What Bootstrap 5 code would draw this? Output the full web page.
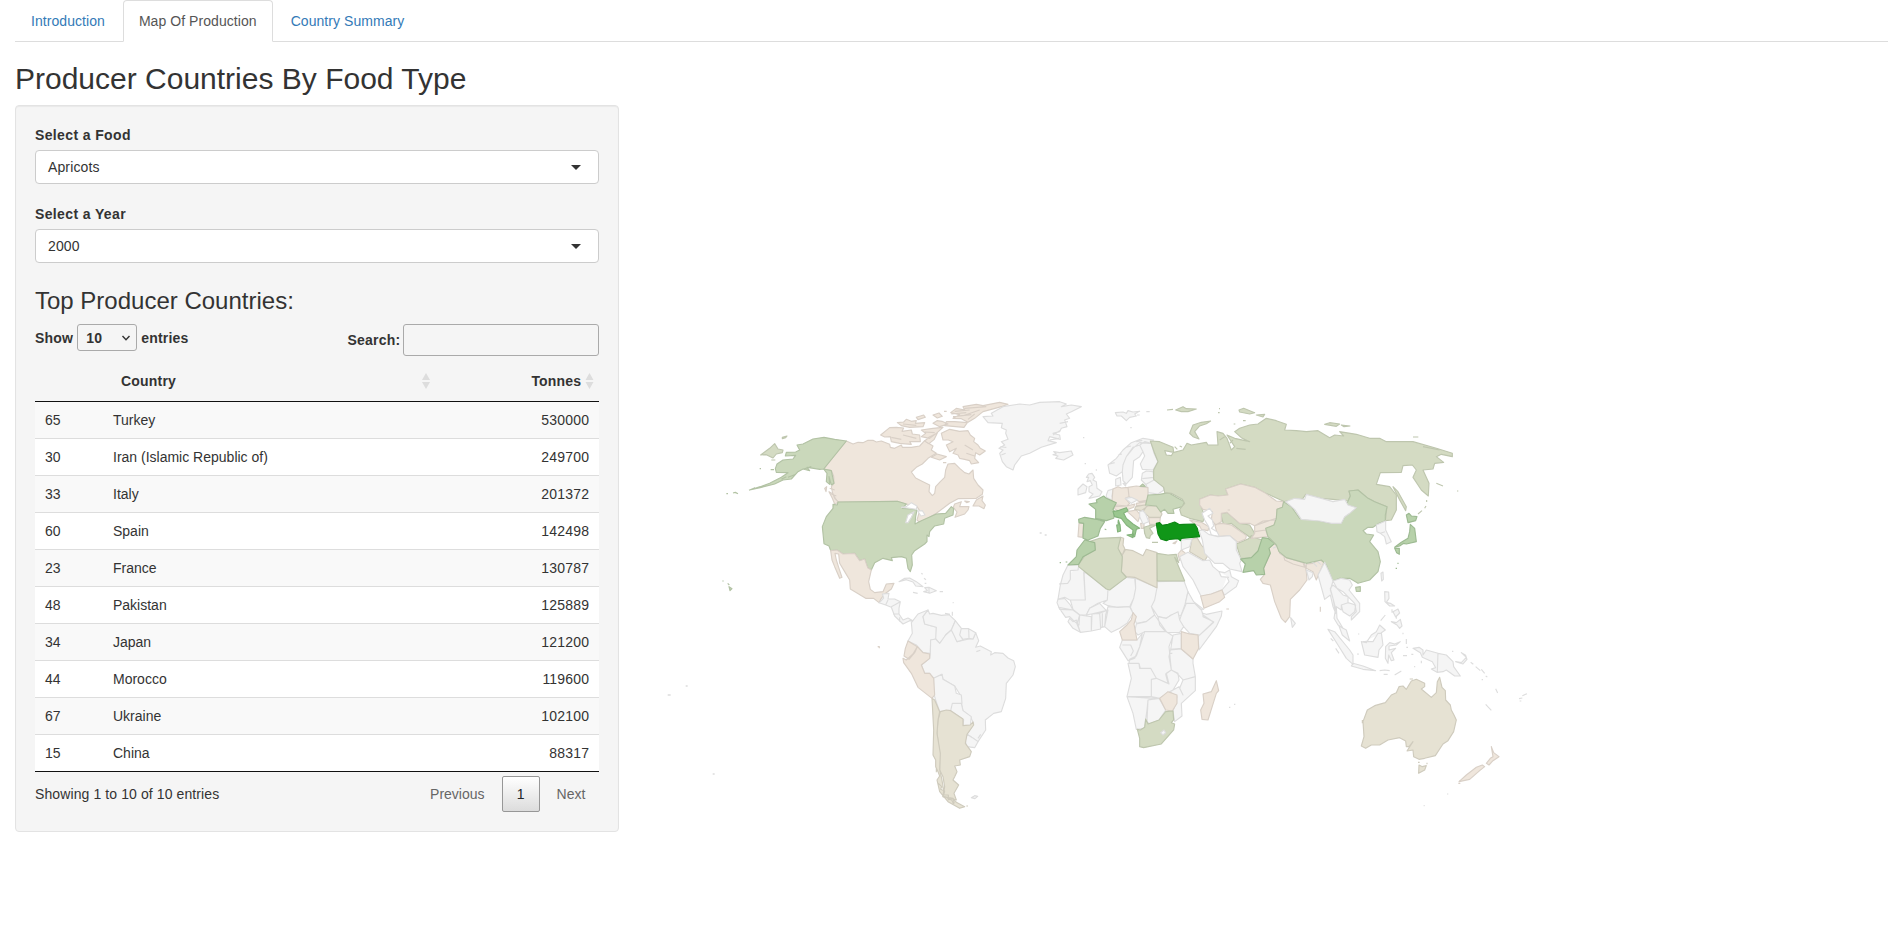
<!DOCTYPE html>
<html lang="en">
<head>
<meta charset="utf-8">
<meta name="viewport" content="width=device-width, initial-scale=1">
<title>Food Production</title>
<link rel="stylesheet" href="https://cdn.jsdelivr.net/npm/bootstrap@5.3.0/dist/css/bootstrap.min.css">
<style>
body{font-family:"Liberation Sans",Arial,sans-serif;font-size:14px;line-height:20px;color:#333;overflow:hidden}
.page{padding:0 15px}
.page .nav-tabs{border-bottom:1px solid #ddd}
.page .nav-tabs .nav-link{padding:10px 15px;margin-right:2px;line-height:20px;color:#337ab7;border-radius:4px 4px 0 0;letter-spacing:.06px}
.page .nav-tabs .nav-link.active{color:#555;border-color:#ddd #ddd #fff}
h2{font-size:30px;line-height:33px;margin:20px 0 10px;font-weight:400}
h3{font-size:24px;line-height:26.4px;margin:25px 0 9.6px;font-weight:400}
.page>.row{--bs-gutter-x:30px}
.well{background:#f5f5f5;border:1px solid #e3e3e3;border-radius:4px;padding:19px;height:727px;box-shadow:inset 0 1px 1px rgba(0,0,0,.05)}
label,.strong-text{font-weight:700;letter-spacing:.2px}
.well>label{display:block;margin-bottom:5px;letter-spacing:.37px}
.picker{height:34px;border:1px solid #ccc;border-radius:4px;background:#fff;padding:0 17px 0 12px;margin-bottom:20px}
.picker span{letter-spacing:.12px}
.picker i{border:5px solid transparent;border-top-color:#333;border-bottom:0}
.len-box{width:60px;height:27px;border:1px solid #aaa;border-radius:3px;padding:0 5px 0 8px}
.search-box{width:196px;height:32px;border:1px solid #aaa;border-radius:3px;background:transparent;margin-left:3px}
.data-grid{width:100%;margin-top:6px;border-collapse:separate;border-spacing:0;table-layout:fixed;border-bottom:1px solid #111}
.data-grid th{height:40px;padding:0 10px 2px 18px;border-bottom:1px solid #111;letter-spacing:.2px}
.data-grid td{height:37px;padding:0 10px;border-top:1px solid #ddd}
.data-grid td.text-end{letter-spacing:.21px}
.data-grid tbody tr:first-child td{height:36px;border-top:0}
.data-grid tbody tr{background:#fff}
.data-grid tbody tr:nth-child(odd){background:#f9f9f9}
.pager-btn{height:36px;width:38px;border:1px solid #979797;border-radius:2px;background:linear-gradient(#fff,#dcdcdc);margin:0 17px}
.info-text{letter-spacing:.1px}
.muted{color:#666}
.world{display:block;width:100%;height:780px}
.world path{stroke:#ddd;stroke-width:3.4;stroke-linejoin:round;fill:#f5f5f5}
.world .c1 path,.world path.c1{fill:#efe6dc;stroke:#d9d0c7}
.world .c2 path,.world path.c2{fill:#e6e2d3;stroke:#cfcbbd}
.world .c3 path,.world path.c3{fill:#d4dbc3;stroke:#bec6ae}
.world .c4 path,.world path.c4{fill:#cad8bb;stroke:#b2c2a4}
.world .c5 path,.world path.c5{fill:#b7d1aa;stroke:#9dba92}
.world .c6 path,.world path.c6{fill:#99c78f;stroke:#84b37c}
.world .c7 path,.world path.c7{fill:#109618;stroke:#0e8715}
.world .sea path{fill:#fff}
.world .isles{stroke-width:1.3}
.world .india{fill:#ebe4d8}
</style>
</head>
<body>
<div class="page">
<ul class="nav nav-tabs">
<li class="nav-item"><a class="nav-link" href="#">Introduction</a></li>
<li class="nav-item"><a class="nav-link active" href="#">Map Of Production</a></li>
<li class="nav-item"><a class="nav-link" href="#">Country Summary</a></li>
</ul>
<h2>Producer Countries By Food Type</h2>
<div class="row">
<div class="col-4">
<div class="well">
<label>Select a Food</label>
<div class="picker d-flex align-items-center justify-content-between"><span>Apricots</span><i></i></div>
<label>Select a Year</label>
<div class="picker d-flex align-items-center justify-content-between"><span>2000</span><i></i></div>
<h3>Top Producer Countries:</h3>
<div class="d-flex justify-content-between align-items-start strong-text">
<div class="d-flex align-items-center gap-1"><span>Show</span><span class="len-box d-flex align-items-center justify-content-between">10<svg width="10" height="8" viewBox="0 0 10 8"><path d="M1.5 2 5 5.800 8.500 2" fill="none" stroke="#333" stroke-width="1.4"/></svg></span><span>entries</span></div>
<div class="d-flex align-items-center"><span>Search:</span><input class="search-box" type="text" aria-label="Search"></div>
</div>
<table class="data-grid">
<colgroup><col style="width:68px"><col style="width:337px"><col></colgroup>
<thead><tr><th></th><th><span class="d-flex align-items-center justify-content-between">Country<svg width="8" height="16" viewBox="0 0 8 16"><path d="M0 7 4 0l4 7zM0 9h8l-4 7z" fill="#ddd"/></svg></span></th><th style="padding-right:5px"><span class="d-flex align-items-center justify-content-end gap-1">Tonnes<svg width="9" height="16" viewBox="0 0 8 16"><path d="M0 7 4 0l4 7zM0 9h8l-4 7z" fill="#ddd"/></svg></span></th></tr></thead>
<tbody>
<tr><td>65</td><td>Turkey</td><td class="text-end">530000</td></tr>
<tr><td>30</td><td>Iran (Islamic Republic of)</td><td class="text-end">249700</td></tr>
<tr><td>33</td><td>Italy</td><td class="text-end">201372</td></tr>
<tr><td>60</td><td>Spain</td><td class="text-end">142498</td></tr>
<tr><td>23</td><td>France</td><td class="text-end">130787</td></tr>
<tr><td>48</td><td>Pakistan</td><td class="text-end">125889</td></tr>
<tr><td>34</td><td>Japan</td><td class="text-end">121200</td></tr>
<tr><td>44</td><td>Morocco</td><td class="text-end">119600</td></tr>
<tr><td>67</td><td>Ukraine</td><td class="text-end">102100</td></tr>
<tr><td>15</td><td>China</td><td class="text-end">88317</td></tr>
</tbody>
</table>
<div class="d-flex justify-content-between align-items-start pt-1">
<span class="pt-2 info-text">Showing 1 to 10 of 10 entries</span>
<div class="d-flex align-items-center muted"><span>Previous</span><span class="pager-btn d-flex align-items-center justify-content-center text-dark">1</span><span style="margin-right:14px">Next</span></div>
</div>
</div>
</div>
<div class="col-8">
<svg class="world" viewBox="649.33 105 1238.67 780" preserveAspectRatio="xMinYMin meet">
<!-- North America -->
<g transform="translate(720 390) scale(.33333)">
<g class="c1">
<path d="M380 153 400 162 415 157 430 158 445 151 460 151 470 156 485 153 510 163 512 172 525 175 545 165 548 172 575 172 600 168 615 152 640 168 635 180 650 190 625 205 608 222 590 232 575 246 588 264 610 275 630 285 628 305 638 317 645 310 648 290 662 275 675 262 678 240 685 222 705 220 720 235 735 248 748 252 760 240 762 265 775 285 790 300 788 313 770 325 715 326 690 340 650 370 625 385 600 398 592 390 600 362 592 350 560 342 533 334 355 336 340 315 335 290 343 280 342 258 335 242 312 237Z"/>
<path d="M705 342 725 335 720 350 748 350 745 360 735 372 706 382 712 366 701 352ZM760 348 770 330 790 318 787 332 797 345 793 356 778 348ZM328 305 340 312 345 325 357 337 345 342 338 325ZM330 295 345 300M335 312 350 318M315 295l6-5-2 15zM735 333l14 2-8 3z"/>
<path d="M665 130 690 118 720 124 745 122 752 135 765 145 762 155 775 165 782 175 797 183 780 195 768 188 765 205 777 218 755 222 750 212 735 208 720 205 715 195 700 190 710 175 690 185 680 165 700 155 686 150 670 150ZM735 165 760 180M740 190 765 198"/>
<path d="M483 135 510 113 530 112 552 114 547 124 575 120 578 132 600 135 602 155 570 155 575 163 540 160 515 155 512 140 495 141ZM515 142 545 148M550 135 590 145M533 98 552 96 560 88 575 94 590 92 587 100 615 98 610 110 570 112 545 107ZM550 102 590 106M605 120 640 115 670 112 650 130 630 145 605 140 618 130ZM615 126 645 128M640 100l12-8 15 2 18 8-25 8zM680 95l25 0 38 3-10 14-58-5zM640 75l18-6 10 10-15 5zM590 82l22-7 5 7-22 7zM673 64h8M635 202 652 192 680 200 660 210ZM615 153l14-12 24-12-10 20-15 12zM670 218h10"/>
<path d="M693 68 710 55 735 60 730 50 770 43 790 47 840 37 865 43 845 50 815 58 790 65 765 85 745 97 725 86 700 85 720 74ZM695 72 740 68M705 64 750 60M700 80 755 74M730 77 780 60M735 55 800 50M745 88 765 72"/>
</g>
<g class="c4">
<path d="M380 153 345 148 313 142 280 147 250 162 232 165 240 180 228 186 200 187 197 198 228 196 220 207 190 210 172 222 167 236 170 247 205 248 185 262 150 280 122 290 90 300 125 292 165 282 190 270 215 267 235 245 250 237 270 242 262 232 282 235 300 238 312 237ZM312 237 322 250 320 275 330 283 328 260 335 285 343 280 335 242ZM185 268l15-8M205 262l20-8M250 238l25-8M20 311h5M40 309l7-2 8 4M88 301l18-8M24 580l5 5M28 590l9 6-6 6zM8 573h4M153 239h10M120 236h4"/>
<path d="M355 336 533 334 560 342 548 355 575 357 592 360 588 380 586 402 605 392 650 372 678 370 695 350 702 356 700 375 675 385 672 402 645 408 630 425 628 440 622 435 622 455 615 462 585 482 576 495 578 525 572 545 565 535 560 505 545 500 515 503 518 512 490 505 465 518 455 540 444 533 435 507 420 512 405 490 370 492 352 480 333 482 328 468 313 461 308 410 320 380 340 355 340 343 353 345Z"/>
</g>
<path class="c3" d="M123 195 150 175 165 161 175 177 190 180 188 188 170 192 160 204 140 194ZM188 142l14-4-4 5-10 3zM155 210h12"/>
<path class="c1" d="M333 482 352 480 370 492 405 490 420 512 435 507 444 533 455 540 447 575 452 598 465 608 490 605 500 582 523 580 515 597 495 612 485 625 478 638 462 625 438 625 392 597 390 570 375 545 360 520 357 492 346 490 350 510 358 535 367 562 360 565 345 530 337 510Z"/>
<g class="sea"><path d="M558 398 565 375 583 365 575 382 565 398ZM545 352 560 350 575 338 592 348 590 358 565 354ZM594 363 608 362 616 375 604 378z"/></g>
</g>
<!-- Pacific islands -->
<path class="isles" d="M668 695h3M686 686h2M713 774h2M1040 533h2M1045 535h2"/>
<!-- South and Central America -->
<g transform="translate(860 570) scale(.33333)">
<path d="M62 95 72 84 68 72 88 70 85 87 105 87 122 95 118 115 118 132 130 150 145 144 165 155 150 152 130 162 105 138 95 112 78 105 58 98ZM78 105 85 90M95 110 122 95M100 132 118 132M120 142 120 155"/>
<path d="M118 35 135 25 150 24 170 35 190 50 168 48 160 36 140 29ZM192 65 203 62 195 53 208 52 230 62 210 70ZM208 53V69M160 67l14 3M240 65h10M185 10l4 3M193 25l6 4M195 40l5 0M279 98h3M256 130l15 3M278 125v12"/>
<path d="M205 120 190 140 195 162 230 172 230 207 213 210 212 250 190 248 170 225 145 213 158 190 155 158 175 132Z"/>
<path d="M205 120 210 132 220 130 245 136 268 134 287 152 275 180 258 195 250 210 240 220 228 207 230 172 195 162 190 140Z"/>
<path d="M213 210 228 207 240 220 258 195 275 180 285 195 292 215 328 207 340 207 348 188 357 212 348 232 362 228 375 235 395 245 393 255 405 248 430 250 445 264 462 272 467 290 460 315 440 340 438 385 425 425 402 430 377 450 378 480 355 515 338 503 322 493 342 460 332 440 310 422 305 400 300 372 285 348 250 328 247 313 222 325 210 310 195 310 185 285 210 265 212 250Z"/>
<path d="M287 152 305 175 300 195 310 210 292 215 280 190 275 180ZM305 175 327 176 328 205 310 208 300 195ZM327 176 348 188 340 207 328 205ZM222 325 247 313 250 328 285 348 290 370 305 375 307 400 278 400 273 422 240 425 228 390 222 370ZM278 400 305 400 310 422 335 440 332 465 310 467 312 450 273 422ZM322 493 338 503 355 515 345 533 320 530 317 510ZM335 683l10-6 9 2-8 7zM350 245l12-4M355 505l8-12"/>
<path class="c2" d="M242 425 260 420 273 422 310 447 310 467 332 465 340 456 342 465 322 493 317 520 335 545 330 560 300 570 302 585 285 588 292 605 285 620 280 630 297 645 283 670 290 690 250 680 255 650 250 620 240 600 240 550 232 490 235 450ZM320 708h5"/>
<path class="c2" d="M217 385 225 390 240 425 235 450 232 490 242 550 240 600 246 625 252 660 250 680 280 685 290 697 315 710 300 715 265 695 240 665 232 630 240 618 235 605 228 590 228 570 220 555 222 480ZM230 595v12M236 640l10 10-3 8 12 5-3 12 14 0 0 14 14-3 4 14M258 680l10 8 8 2 6 12"/>
<path class="c1" d="M130 265 140 270 160 252 173 230 190 248 210 252 210 265 185 285 195 310 210 310 222 325 225 375 217 385 175 352 155 310 132 278ZM145 213 173 230 165 248 148 268 133 258 137 235ZM54 230h5v5"/>
</g>
<!-- Africa -->
<g transform="translate(1040 520) scale(.33333)">
<path d="M85 135 118 135 150 160 132 158 137 240 90 240 75 232 55 238 62 195 70 165ZM117 137 115 150 92 152 92 178 84 190 58 192M133 155 205 208 203 240 175 250 150 265 140 285 120 285 100 268 92 240 137 240ZM205 208 260 172 285 175 288 205 282 235 270 260 230 262 205 257 190 250 203 240ZM287 175 352 203 345 240 335 260 345 285 320 305 290 310 280 280 272 262 282 235 288 205ZM352 185 433 183 445 215 437 250 425 285 410 292 395 285 380 295 355 290 335 260 345 240 352 203Z"/>
<path d="M355 290 380 295 395 285 415 275 420 300 432 320 420 337 380 338 360 315ZM285 335 290 312 320 305 345 285 380 335 350 338 315 335 295 345ZM440 250 465 250 485 268 490 285 522 307 480 345 450 340 432 320 420 300 425 285ZM445 215 462 245 492 268 485 270 465 250 437 250ZM490 280 500 283 547 273 545 288 530 320 478 390 475 350 522 305 490 290Z"/>
<path d="M55 238 75 235 92 255 100 270 60 268 52 248ZM57 262 100 270 120 285 118 315 105 305 90 290 78 292ZM90 295 100 305 110 300 122 337 100 325 85 305ZM120 285 155 290 155 333 122 337 112 312ZM140 285 150 265 180 250 200 272 155 282ZM157 282 180 280 183 327 155 333ZM180 280 205 270 195 320 183 323ZM188 280V322M205 260 235 262 270 260 280 280 262 310 240 325 215 337 195 320 198 285Z"/>
<path d="M248 360 292 360 308 340 300 380 285 415 265 422 240 382ZM248 375h25l8 18-8 15M315 335 350 335 380 335 400 348 388 380 390 400 395 450 378 462 385 490 350 475 333 445 300 445 298 430 268 430 270 418 290 408 302 375ZM400 345 425 340 425 385 393 388ZM392 390 425 387 460 417 460 430 467 470 430 480 412 460 395 450 388 410ZM388 400h10M265 430 298 430 302 445 333 445 350 475 335 478 335 530 262 530 275 475ZM335 478 350 475 388 492 380 460 395 450 415 460 418 480 400 510 360 535 335 530ZM430 480 467 470 467 512 425 550 427 588 405 605 400 575 412 530 390 515 418 500 430 525 420 505ZM262 530 345 535 325 540 322 570 318 598 315 625 290 628 280 580ZM325 540 358 535 378 570 358 600 330 612 322 605Z"/>
<path class="c1" d="M280 278 290 290 283 312 292 360 248 360 240 335 262 315 275 300ZM425 335 450 342 475 345 477 385 460 417 425 387ZM360 535 385 515 412 525 412 550 398 573 378 570ZM530 482 537 512 530 520 505 600 487 598 483 570 493 550 490 522 515 515Z"/>
<path class="c3" d="M293 628 302 630 315 622 318 597 325 612 358 600 378 575 400 573 402 600 395 608 405 612 402 630 365 672 312 683 300 680 300 655Z"/>
<path d="M363 638l10-8 5 8-8 7zM568 562h4M583 553h4"/>
</g>
<!-- Europe, North Africa, Greenland -->
<g transform="translate(960 390) scale(.33333)">
<path d="M70 80 100 78 95 70 130 50 180 42 210 45 240 37 300 35 320 42 305 50 335 45 365 50 335 65 320 72 330 85 315 90 322 110 305 115 300 125 280 130 300 135 302 148 270 140 265 152 290 158 245 172 210 190 185 198 165 225 160 240 140 230 128 215 120 190 130 180 118 175 135 165 125 155 145 148 138 130 140 120 125 113 128 100 85 98ZM300 100 325 95M280 135 300 122M270 150 298 145M125 195 138 190M122 170 140 172"/>
<path d="M280 194 290 192 282 185 300 188 335 183 340 195 312 210 288 205 295 198ZM467 68 490 66 500 70 505 62 520 66 540 64 525 72 530 78 510 82 500 92 485 78 472 78ZM388 325 400 312 388 305 388 290 398 285 392 272 382 275 387 262 380 262 387 252 397 250 405 262 400 270 410 275 412 295 427 305 420 318ZM355 297 370 282 382 290 378 308 355 315ZM370 143h4M375 221h4M410 238v4M532 75h8M560 65h10M512 113h4"/>
<path d="M450 250 445 225 470 205 490 180 515 158 550 145 582 150 570 160 540 158 520 175 500 200 490 225 488 245 470 258ZM488 245 490 225 500 200 520 172 540 165 550 185 540 200 522 212 520 235 518 262 500 282 490 272ZM540 165 555 155 575 160 583 190 595 215 580 240 548 238 542 222 555 198 550 185ZM468 288 468 268 482 262 484 285ZM490 280h8v8zM450 222l15-4M475 195l12-3M500 172l14-4M530 155l18-4"/>
<path d="M548 250 560 243 580 245 583 265 610 285 613 300 595 312 565 308 560 285 545 270ZM548 266 583 262M555 285 583 270M440 315 445 302 460 297 457 320 467 335 440 322Z"/>
<g class="c1"><path d="M460 297 475 290 485 294 505 292 508 320 497 325 510 340 502 348 468 350 457 332ZM505 292 530 288 565 293 565 330 540 335 508 320ZM462 355 470 345 502 348 525 342 522 352 500 360 475 362ZM530 340 560 335 558 345 530 347ZM503 365 530 360 542 375 535 395 520 380ZM543 400l10 0 0 15-8 0zM640 460l12-7-6 8zM358 400 372 400 368 442 355 440ZM655 492 665 480 678 490 660 512ZM690 390 725 397 748 410 745 422 725 418 720 408 705 402ZM567 383 602 382 600 402 570 403Z"/></g>
<g class="c2"><path d="M562 348 595 348 607 372 602 382 570 382 550 365ZM528 350 555 345 562 350 545 362 525 358ZM483 442 492 445 490 465 497 480 488 495 472 478ZM495 478 520 482 550 497 560 478 592 488 592 593 525 562 500 560 485 545 488 495ZM697 447 712 443 725 465 748 492 735 512 690 485Z"/></g>
<path d="M497 325 515 322 533 330 515 340ZM540 365 550 362 558 372 567 395 550 402 540 380ZM665 450 697 447 690 470 665 480Z"/>
<path class="c4" d="M565 315 600 313 627 308 655 325 675 335 668 350 640 358 643 370 625 370 615 358 603 366 590 348 558 345ZM541 289l8-7 8 7z"/>
<path class="c3" d="M553 412 575 405 590 405 570 415 580 430 572 437 570 445 560 443 555 430ZM577 457h18M380 458 420 445 483 442 475 475 488 500 485 545 500 562 450 600 440 597 357 530 357 523 375 498 407 480 405 458ZM592 490 625 495 650 493 657 518 645 502 675 573 593 573Z"/>
<path class="c5" d="M388 342 412 338 410 330 432 318 440 325 470 338 460 358 465 365 462 385 440 392 408 385 408 358ZM357 388 375 382 410 388 435 395 422 415 415 438 385 450 370 445 372 400 358 398ZM375 450 405 458 407 480 370 500 357 523 325 525 350 500 352 480ZM435 417l5 2M300 518h4M318 516h5"/>
<path class="c6" d="M460 365 475 362 500 353 505 362 492 370 500 385 520 402 540 415 530 418 525 440 518 438 520 420 500 405 485 385 465 380ZM502 435 522 432 520 443ZM471 405l10-2 2 20-9 3zM476 390l4 12-5-2z"/>
<path class="c7" d="M590 400 600 398 608 406 625 403 645 396 660 404 672 403 705 402 713 415 720 440 665 445 662 452 655 446 630 448 620 452 603 447 595 432 592 415Z"/>
</g>
<!-- Asia -->
<g transform="translate(1140 390) scale(.33333)">
<g class="c3">
<path d="M32 153 60 155 100 172 102 187 75 182 80 195 95 197 100 188 130 180 142 160 155 165 200 157 205 165 235 165 232 125 250 130 262 145 275 180 285 170 262 135 285 145 330 155 305 143 285 125 300 115 330 105 355 102 380 85 410 92 440 103 435 120 470 122 500 125 535 122 570 143 585 135 612 138 600 125 650 133 690 145 720 145 740 155 820 155 890 175 938 190 938 200 905 193 890 200 912 217 885 220 880 237 850 240 868 280 866 318 845 300 820 262 830 240 818 225 790 227 785 247 722 248 710 283 750 290 770 315 770 360 755 390 737 392 742 350 705 335 685 325 655 300 628 303 632 318 625 333 580 328 545 325 498 313 490 325 435 335 375 308 345 292 303 282 258 297 265 315 235 318 212 315 180 328 185 350 195 380 190 395 150 385 125 375 120 358 135 340 128 328 95 310 75 308 72 292 42 268 42 240 55 215 45 190Z"/>
<path d="M150 130 160 105 185 97 213 93 200 101 180 108 165 125 178 147 160 140ZM760 290 775 305 800 350 798 362 780 330ZM298 60 312 55 345 68 330 72 300 66ZM350 75l25-2-5 8zM82 60 100 58M108 60l22-10 10 6 30 1-25 8-20 0zM555 103l15-5 30 4-10 7zM605 105l26 3-18 2zM820 141l16 0M235 68h5M282 102h5M238 56h3M310 92h8M105 170l8 8M120 168l7 3M240 150 255 140M270 160 280 150M290 175 318 178M850 170 900 180M890 280l20 8M952 303h4M835 372l12-10M855 355l4-7M861 330v6"/>
<path d="M243 372 262 367 300 400 330 405 345 430 335 445 300 420 275 400 252 405ZM345 404l12 0 4 10-15 0zM290 462 325 447 335 437 350 445 368 450 355 485 335 505 303 505Z"/>
</g>
<path class="c1" d="M180 328 212 315 235 318 265 315 258 297 303 282 345 292 375 308 410 333 432 335 428 352 412 358 410 385 380 395 345 407 330 400 300 400 262 367 245 370 245 395 228 405 215 390 218 365 190 358 180 345ZM225 403 248 400 275 405 320 437 318 447 295 457 270 437 235 440ZM345 407 370 393 408 390 403 405 378 420 385 440 335 445 345 430ZM345 425 378 420M264 360h7"/>
<g class="sea"><path d="M187 370 210 355 220 370 205 378 218 390 222 408 215 415 232 425 240 440 215 435 207 410 195 390Z"/></g>
<path d="M178 422 190 420 207 433 235 440 270 437 290 455 290 480 305 510 300 520 307 545 270 537 250 520 225 520 195 490 188 450Z"/>
<path d="M120 500 145 487 190 512 210 510 220 530 238 545 255 548 270 540 275 560 297 572 290 590 255 615 245 600 215 612 185 620 160 570 130 530ZM247 600 268 575 262 560M238 545 245 560 268 562"/>
<path class="c1" d="M183 618 215 612 247 600 255 622 240 635 193 655ZM260 657h8M542 650v15"/>
<path class="c1 india" d="M388 475 400 460 418 472 420 490 440 503 495 520 500 545 502 570 480 600 452 628 450 680 437 697 425 685 405 635 392 585 370 580 362 568 375 553 372 535 392 490ZM500 522 520 520 538 510 553 515 545 535 530 570 520 545 500 535ZM433 500 490 518 495 532 460 522 435 510Z"/>
<path d="M500 540 520 548 518 560 508 570ZM385 450 405 460M388 470l20-12M400 475l15-8M520 518l12 12M530 512l14 12"/>
<path class="c5" d="M303 507 335 503 355 483 368 443 385 445 405 460 388 475 392 490 372 535 375 553 350 555 342 542 310 547 317 522ZM800 375 808 370 815 378 832 380 828 392 805 398ZM812 403 825 415 830 455 800 462 792 460 780 468 765 472 785 457 805 445 810 425ZM765 475l14 0 0 18-8-5zM775 518v4M768 535h4"/>
<path class="c4" d="M432 335 455 350 480 385 540 393 575 400 605 400 615 380 650 353 620 345 632 318 628 303 655 300 685 325 705 335 742 350 737 375 737 392 718 400 700 412 685 412 670 422 680 432 702 435 690 455 715 485 722 515 715 545 690 570 655 580 630 565 600 565 580 573 568 545 560 525 545 510 500 520 440 503 418 485 410 465 385 440 378 415 403 405 410 385 412 358 428 352ZM648 592l14-2 0 14-12 0z"/>
<path d="M438 335 465 325 495 328 500 313 545 325 580 335 615 328 625 345 650 353 630 370 615 380 605 400 575 400 540 393 485 388 465 358ZM710 405 738 393 738 420 755 455 740 462 735 440 722 430 712 425ZM722 430 736 425M724 550l6-4 1 22-5 5zM453 683 467 700 458 712Z"/>
</g>
<!-- Southeast Asia and Oceania -->
<g transform="translate(1300 570) scale(.33333)">
<path d="M55 15 75-23 88 5 100 33 92 60 100 85 108 130 100 110 92 75 75 88ZM92 55 100 45 112 55 130 75 145 80 145 98 125 105 125 120 110 110 112 145 130 175 115 165 103 145 108 115 100 85ZM100 33 125 25 150 30 158 45 148 60 180 100 180 125 155 150 155 140 170 125 165 100 130 65 112 55ZM125 105 145 98 168 105 165 125 150 138 130 125ZM118 168 140 180 150 213 128 195ZM85 178 105 185 150 240 160 255 160 283 140 265 115 225ZM160 280 190 288 228 302 190 298 155 288Z"/>
<path d="M185 215 200 218 215 195 230 185 240 165 257 180 245 188 250 225 238 240 235 262 195 255ZM190 215 220 215 235 190 247 190M258 230 270 218 285 222 302 215 290 225 268 228 268 240 288 235 275 248 283 270 275 272 267 255 265 280 257 265ZM255 65 267 66 268 85 260 97 272 100 285 108 270 108 256 95ZM280 125l15-8 5 12-12 12zM275 155 290 158 302 148 307 168 300 175 292 165zM243 152 257 135M277 118v10M290 138v8M320 207v15M320 232h5M310 257h12M240 302 255 300 270 302M285 315l20-12M93 205l8 8M108 235l10 15M175 192h4M310 188v5M175 250v5"/>
<path d="M340 235 358 232 370 240 370 255 380 240 415 250 440 255 460 275 462 290 482 318 465 318 440 300 430 305 412 307 395 297 408 293 398 275 368 262 362 248ZM415 248 413 307M468 275 485 278 500 262 485 248 498 256 502 268 490 282ZM513 277l8 6M528 290l14 12M545 298l10 12M558 318l5 3M546 329h4M588 356l6 13M558 403l17 18M658 386l10-2M668 377l14-6M660 393h5M457 244h4M345 292v-4M365 272v8M442 672h4M372 707h3M252 313h12M335 253h6"/>
<path class="c2" d="M185 528 193 500 190 455 203 420 225 407 257 398 275 375 290 368 298 350 310 348 320 358 335 333 350 328 375 340 375 350 365 357 395 382 410 368 413 335 420 322 427 352 437 362 438 390 452 405 455 420 463 435 470 450 462 485 445 512 430 522 407 557 375 565 358 568 342 560 340 540 322 543 340 515 328 530 320 530 318 513 300 503 265 510 240 525 215 525 198 535ZM358 585 368 590 380 587 375 600 357 610ZM330 327h10M382 578v5M188 450v10M355 577h5"/>
<path class="c1 india" d="M575 530 582 548 598 560 580 572 568 585 560 580 572 565 580 560zM548 585 555 590 540 602 510 628 478 635 500 615 530 592zM476 640h6"/>
</g>
</svg>
</div>
</div>
</div>
<script src="https://cdn.jsdelivr.net/npm/bootstrap@5.3.0/dist/js/bootstrap.bundle.min.js"></script>
</body>
</html>
